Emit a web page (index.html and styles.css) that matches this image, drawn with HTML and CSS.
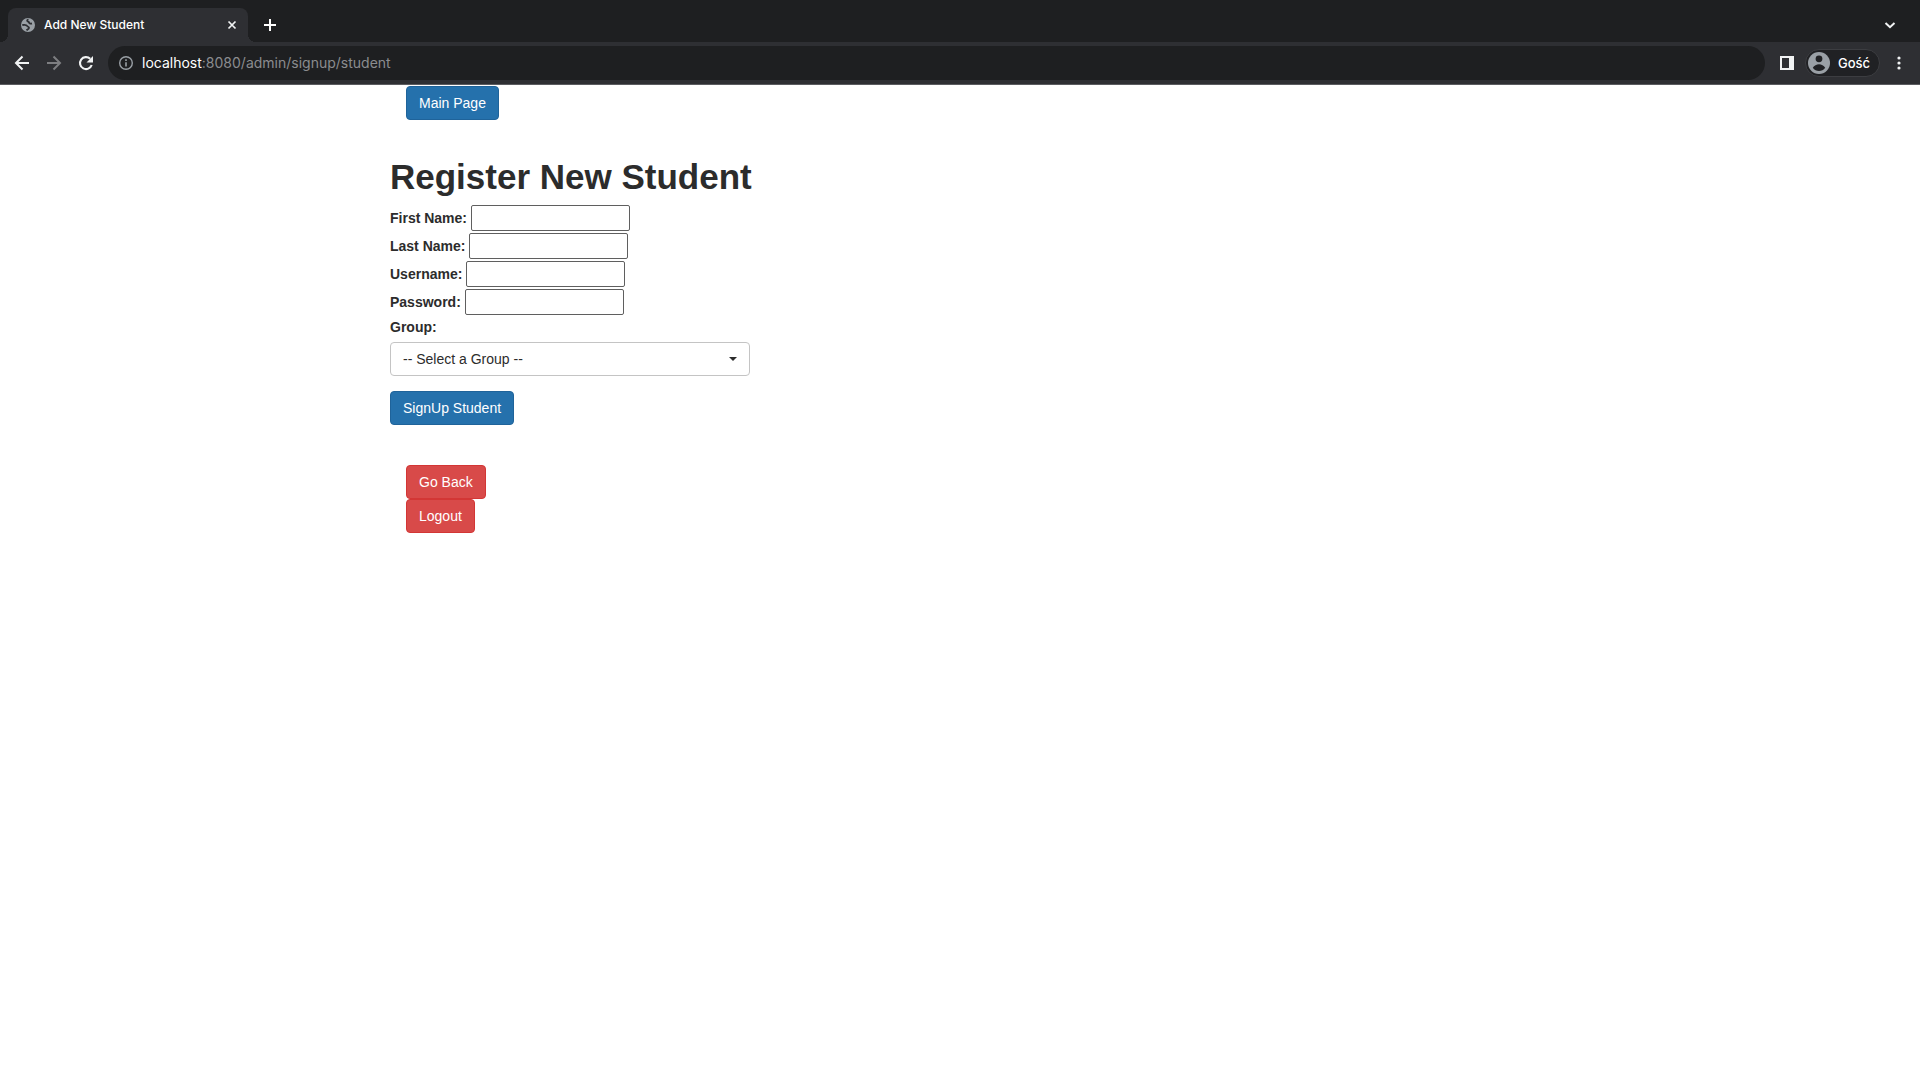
FILE: index.html
```html
<!DOCTYPE html>
<html lang="en">
<head>
<meta charset="utf-8">
<title>Add New Student</title>
<link rel="stylesheet" href="styles.css">
</head>
<body>
<header class="browser">
  <div class="tab-strip">
    <div class="tab">
      <svg class="icon-16" viewBox="0 0 16 16" aria-hidden="true"><circle cx="8" cy="8" r="7" fill="#9aa0a6"/><path d="M8.500 2.300C6.500 3 6.800 4.600 8.600 4.800c.3 1.500 1.600 2.100 3.400 1.700M2.300 8c1.800-.3 4.200-.4 4.700.8.400 1.200 2 .7 2 2-.2 1.300-1.600 1.600-2.500 2.600" fill="none" stroke="#2e2f33" stroke-width="1.800"/></svg>
      <span class="tab-title">Add New Student</span>
      <button class="icon-button" aria-label="Close tab"><svg class="icon-16" viewBox="0 0 16 16"><path d="M4.500 4.500l7 7M11.500 4.500l-7 7" stroke="#f1f3f4" stroke-width="1.700"/></svg></button>
    </div>
    <button class="icon-button new-tab" aria-label="New tab"><svg class="icon-16" viewBox="0 0 16 16"><path d="M8 2v12M2 8h12" stroke="#fff" stroke-width="2"/></svg></button>
    <button class="icon-button tab-search" aria-label="Search tabs"><svg class="icon-16" viewBox="0 0 16 16"><path d="M3.500 6L8 10.200 12.500 6" fill="none" stroke="#f1f3f4" stroke-width="2"/></svg></button>
  </div>
  <div class="toolbar">
    <nav class="nav-buttons">
      <button class="icon-button" aria-label="Back"><svg class="icon-16" viewBox="0 0 16 16"><path d="M15 8H2.500M8.500 1.500L2 8l6.500 6.500" fill="none" stroke="#f1f3f4" stroke-width="2"/></svg></button>
      <button class="icon-button" aria-label="Forward"><svg class="icon-16" viewBox="0 0 16 16"><path d="M1 8h12.500M7.500 1.500L14 8l-6.500 6.500" fill="none" stroke="#7d7e81" stroke-width="2"/></svg></button>
      <button class="icon-button" aria-label="Reload"><svg class="icon-16" viewBox="0 0 16 16"><path d="M13.700 10A6 6 0 1 1 12.200 3.800" fill="none" stroke="#f1f3f4" stroke-width="2.100"/><path d="M15 1v6.500H8.500z" fill="#f1f3f4"/></svg></button>
    </nav>
    <div class="address">
      <svg class="icon-16" viewBox="0 0 16 16" aria-hidden="true"><circle cx="8" cy="8" r="6.300" fill="none" stroke="#9aa0a6" stroke-width="1.400"/><path d="M8 7.200v4.200M8 4.300v1.600" stroke="#9aa0a6" stroke-width="1.600"/></svg>
      <div class="url" role="textbox" aria-label="Address"><span class="url-host">localhost</span>:8080/admin/signup/student</div>
    </div>
    <button class="icon-button" aria-label="Side panel"><svg class="icon-16" viewBox="0 0 16 16"><path d="M1 1h14v14H1zM3 3v10h7V3z" fill="#f1f3f4" fill-rule="evenodd"/></svg></button>
    <button class="profile"><svg class="avatar" viewBox="0 0 22 22" aria-hidden="true"><circle cx="11" cy="11" r="11" fill="#9aa0a6"/><circle cx="11" cy="6.800" r="3.400" fill="#202124"/><path d="M4.800 15.800c2.800-4.800 9.600-4.800 12.400 0-3 4.300-9.400 4.300-12.400 0z" fill="#202124"/></svg>Gość</button>
    <button class="icon-button" aria-label="Menu"><svg class="icon-16" viewBox="0 0 16 16"><g fill="#f1f3f4"><circle cx="8" cy="3" r="1.600"/><circle cx="8" cy="8" r="1.600"/><circle cx="8" cy="13" r="1.600"/></g></svg></button>
  </div>
</header>
<main class="container">
  <div class="actions"><a class="btn btn-primary" href="#">Main Page</a></div>
  <h1>Register New Student</h1>
  <form class="signup">
    <div class="field"><label for="first">First Name:</label><input id="first" type="text"></div>
    <div class="field"><label for="last">Last Name:</label><input id="last" type="text"></div>
    <div class="field"><label for="user">Username:</label><input id="user" type="text"></div>
    <div class="field"><label for="pass">Password:</label><input id="pass" type="password"></div>
    <label class="group-label" for="group">Group:</label>
    <div class="select-wrap">
      <select id="group"><option>-- Select a Group --</option></select>
      <span class="caret"></span>
    </div>
    <button class="btn btn-primary" type="button">SignUp Student</button>
  </form>
  <div class="actions">
    <a class="btn btn-danger" href="#">Go Back</a>
    <a class="btn btn-danger" href="#">Logout</a>
  </div>
</main>
</body>
</html>
```
FILE: styles.css
```css
* { box-sizing: border-box; }
body {
  margin: 0;
  background: #fff;
  color: #2c2c2c;
  font: 14px/20px "Liberation Sans", Arial, sans-serif;
}

/* Browser window */
.browser {
  background: #2e2f33;
  border-bottom: 1px solid #5b5c60;
  color: #fff;
  font-family: Inter, sans-serif;
}
.tab-strip {
  display: flex;
  align-items: flex-end;
  height: 42px;
  padding: 0 22px 0 8px;
  background: #1e1f21;
}
.tab {
  position: relative;
  display: flex;
  align-items: center;
  gap: 8px;
  width: 240px;
  height: 34px;
  padding: 0 8px 0 12px;
  border-radius: 8px 8px 0 0;
  background: #2e2f33;
}
.tab::before, .tab::after {
  content: "";
  position: absolute;
  bottom: 0;
  width: 8px;
  height: 8px;
}
.tab::before { left: -8px; background: radial-gradient(circle at 0 0, transparent 8px, #2e2f33 8px); }
.tab::after { right: -8px; background: radial-gradient(circle at 100% 0, transparent 8px, #2e2f33 8px); }
.tab-title { flex: 1; font-size: 12px; font-weight: 500; }
.icon-16 { display: block; width: 16px; height: 16px; flex: none; }
.icon-button { padding: 0; border: 0; background: none; }
.new-tab { margin: 0 0 9px 14px; }
.tab-search { margin: 0 0 9px auto; }
.toolbar {
  display: flex;
  align-items: center;
  height: 42px;
  padding: 0 13px 0 14px;
}
.nav-buttons { display: flex; gap: 16px; margin-right: 14px; }
.address {
  flex: 1;
  display: flex;
  align-items: center;
  gap: 8px;
  height: 34px;
  margin-right: 14px;
  padding: 0 10px;
  border-radius: 17px;
  background: #1e1f21;
}
.url { color: #8b8c8f; font-size: 14px; }
.url-host { color: #fff; }
.profile {
  display: flex;
  align-items: center;
  gap: 8px;
  height: 28px;
  margin: 0 11px 0 10px;
  padding: 0 9px 0 2px;
  border: 1px solid #3c3d41;
  border-radius: 14px;
  background: #202124;
  color: #fff;
  font: 500 13px/20px Inter, sans-serif;
}
.avatar { width: 22px; height: 22px; }

/* Page */
.container {
  max-width: 1170px;
  margin: 0 auto;
  padding: 1px 15px;
}
.actions {
  display: flex;
  flex-direction: column;
  align-items: flex-start;
  padding-left: 16px;
}
.btn {
  display: inline-block;
  padding: 6px 12px;
  border: 1px solid;
  border-radius: 4px;
  color: #fff;
  font: inherit;
  text-decoration: none;
}
.btn-primary { background: #2571ac; border-color: #1f639a; }
.btn-danger { background: #d84a49; border-color: #d33635; }
h1 { margin: 37px 0 8px; font-size: 35px; line-height: 40px; }
.signup { margin-bottom: 40px; }
.field { display: flex; align-items: center; gap: 4px; height: 26px; margin-bottom: 2px; }
label { font-weight: bold; }
.field input {
  width: 159px;
  height: 26px;
  border: 1px solid #5f5f5f;
  border-radius: 2px;
  background: #fff;
  font: inherit;
}
.group-label { display: block; margin-bottom: 5px; }
.select-wrap { position: relative; width: 360px; max-width: 100%; margin-bottom: 15px; }
select {
  display: block;
  appearance: none;
  width: 100%;
  height: 34px;
  padding: 0 12px;
  border: 1px solid #c4c4c4;
  border-radius: 4px;
  background: #fff;
  color: #2c2c2c;
  font: inherit;
}
.caret {
  position: absolute;
  top: 15px;
  right: 13px;
  border: 4px solid transparent;
  border-top-color: #2c2c2c;
  border-bottom: 0;
  pointer-events: none;
}
```
